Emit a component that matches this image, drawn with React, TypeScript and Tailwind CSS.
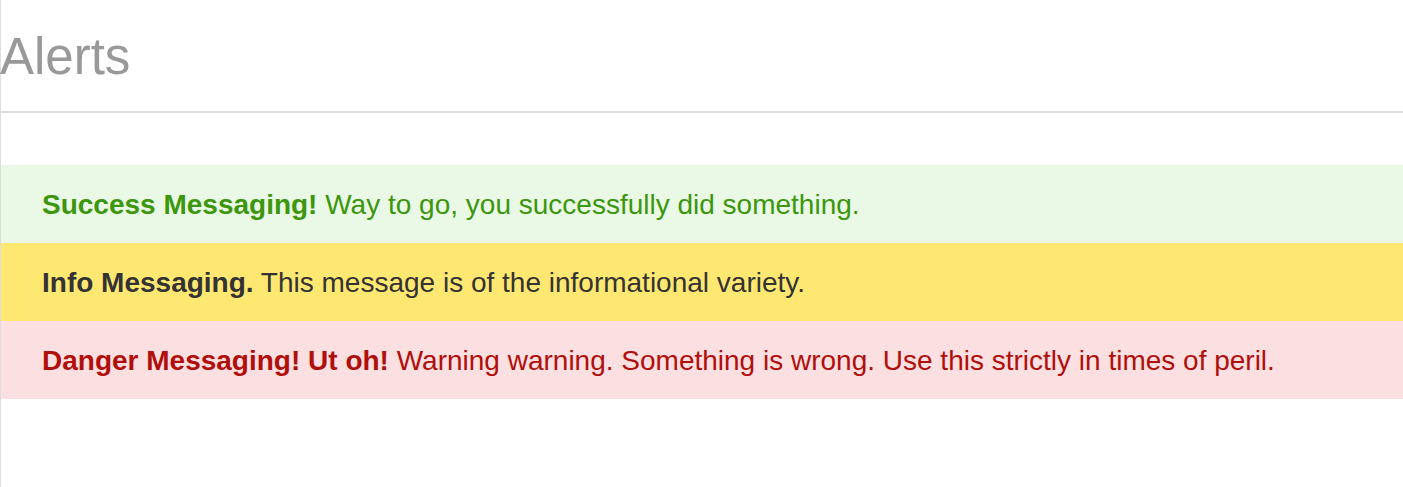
export default function App() {
  const font = { fontFamily: '"Liberation Sans", Arial, sans-serif' };
  return (
    <div className="min-h-[487px] w-full bg-white border-l border-[#dddddd]" style={font}>
      <h1 className="text-[51px] leading-none text-[#999999] pt-[31px] pb-[29px] -ml-px font-normal">Alerts</h1>
      <div className="h-[2px] bg-[#dddddd]" />
      <div className="mt-[52px] flex flex-col">
        <div className="h-[78px] flex items-center pl-[41px] pt-px bg-[#eaf9e5] text-[#3c960e] text-[28px]">
          <p><strong className="font-bold">Success Messaging!</strong> Way to go, you successfully did something.</p>
        </div>
        <div className="h-[78px] flex items-center pl-[41px] pt-px bg-[#ffe872] text-[#333333] text-[28px]">
          <p><strong className="font-bold">Info Messaging.</strong> This message is of the informational variety.</p>
        </div>
        <div className="h-[78px] flex items-center pl-[41px] pt-px bg-[#fcdfe0] text-[#b00f0c] text-[28px]">
          <p><strong className="font-bold">Danger Messaging! Ut oh!</strong> Warning warning. Something is wrong. Use this strictly in times of peril.</p>
        </div>
      </div>
    </div>
  );
}
